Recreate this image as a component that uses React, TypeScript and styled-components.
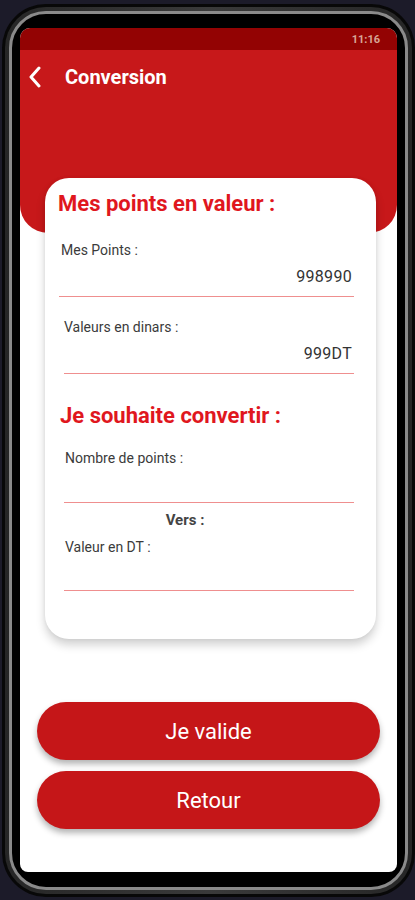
import React from 'react';
import styled, { createGlobalStyle } from 'styled-components';

const GlobalStyle = createGlobalStyle`
  html, body {
    margin: 0;
    padding: 0;
    background: #1c1b29;
    font-family: Roboto, "Liberation Sans", sans-serif;
  }
`;

interface FieldData {
  label: string;
  value?: string;
  indent?: boolean;
}

const pointsFields: FieldData[] = [
  { label: 'Mes Points :', value: '998990' },
  { label: 'Valeurs en dinars :', value: '999DT', indent: true },
];

const BackIcon: React.FC = () => (
  <svg width="12" height="22" viewBox="0 0 12 22" fill="none">
    <polyline points="10,2 2,11 10,20" stroke="#fff" strokeWidth="3" strokeLinecap="round" strokeLinejoin="round" />
  </svg>
);

const Field: React.FC<FieldData> = ({ label, value, indent = false }) => (
  <FieldBlock $indent={indent}>
    <FieldLabel>{label}</FieldLabel>
    <FieldValue>{value ?? '\u00a0'}</FieldValue>
  </FieldBlock>
);

export default function App() {
  return (
    <>
      <GlobalStyle />
      <Phone>
        <Rim>
          <Bezel>
            <Screen>
              <StatusBar>11:16</StatusBar>
              <Header>
                <HeaderRow>
                  <BackIcon />
                  <HeaderTitle>Conversion</HeaderTitle>
                </HeaderRow>
              </Header>

              <Card>
                <SectionTitle>Mes points en valeur :</SectionTitle>
                {pointsFields.map(f => <Field key={f.label} {...f} />)}

                <SectionTitle $spaced>Je souhaite convertir :</SectionTitle>
                <InputField $indent>
                  <FieldLabel>Nombre de points :</FieldLabel>
                </InputField>
                <Vers>Vers :</Vers>
                <InputField $indent $compact>
                  <FieldLabel>Valeur en DT :</FieldLabel>
                </InputField>
              </Card>

              <Actions>
                <ActionButton>Je valide</ActionButton>
                <ActionButton>Retour</ActionButton>
              </Actions>
            </Screen>
          </Bezel>
        </Rim>
      </Phone>
    </>
  );
}

const Phone = styled.div`
  box-sizing: border-box;
  margin: 4px 0 0 2px;
  width: 413px;
  height: 893px;
  padding: 3px;
  background: #080808;
  border-radius: 44px;
  display: flex;
`;

const Rim = styled.div`
  flex: 1;
  display: flex;
  padding: 4px;
  border-radius: 41px;
  background: linear-gradient(90deg, #262626, #3a3a3a 50%, #262626);
`;

const Bezel = styled.div`
  flex: 1;
  display: flex;
  padding: 14px 8px 15px;
  border: 3px solid #8a8a8a;
  border-radius: 37px;
  background: #000;
`;

const Screen = styled.div`
  flex: 1;
  display: flex;
  flex-direction: column;
  background: #fff;
  border-radius: 10px 10px 8px 8px;
  overflow: hidden;
`;

const StatusBar = styled.div`
  height: 22px;
  flex-shrink: 0;
  display: flex;
  align-items: center;
  justify-content: flex-end;
  padding-right: 17px;
  background: #930303;
  color: #d8a596;
  font-size: 11px;
  font-weight: 700;
`;

const Header = styled.div`
  height: 183px;
  flex-shrink: 0;
  background: #c7181a;
  border-radius: 0 0 28px 28px;
`;

const HeaderRow = styled.div`
  display: flex;
  align-items: center;
  height: 22px;
  margin-top: 16px;
  padding-left: 9px;
  gap: 24px;
`;

const HeaderTitle = styled.span`
  color: #fff;
  font-size: 20px;
  font-weight: 700;
`;

const Card = styled.div`
  position: relative;
  margin: -55px 21px 0 25px;
  padding: 13px 22px 48px 13px;
  background: #fff;
  border-radius: 24px;
  box-shadow: 0 6px 10px rgba(0, 0, 0, 0.18), 0 0 4px rgba(0, 0, 0, 0.05);
`;

const SectionTitle = styled.h2<{ $spaced?: boolean }>`
  margin: ${p => (p.$spaced ? '29px 0 0 2px' : '0')};
  color: #e0171e;
  font-size: 22px;
  font-weight: 700;
  line-height: 26px;
`;

const FieldBlock = styled.div<{ $indent?: boolean }>`
  margin: 25px 0 0 ${p => (p.$indent ? '6px' : '1px')};
  padding: 0 0 0 ${p => (p.$indent ? '0' : '2px')};
  border-bottom: 1.5px solid #ef8f8f;
  & + & {
    margin-top: 22px;
  }
`;

const FieldLabel = styled.div`
  color: #3b3b3b;
  font-size: 14px;
  line-height: 16px;
`;

const FieldValue = styled.div`
  margin-top: 9px;
  padding: 0 2px 9px 0;
  text-align: right;
  color: #333;
  font-size: 16px;
  line-height: 20px;
  letter-spacing: 0.3px;
`;

const InputField = styled.div<{ $indent?: boolean; $compact?: boolean }>`
  margin: ${p => (p.$compact ? '11px' : '21px')} 0 0 ${p => (p.$indent ? '6px' : '0')};
  padding: 0 0 0 ${p => (p.$indent ? '1px' : '0')};
  height: ${p => (p.$compact ? '52px' : '53px')};
  box-sizing: border-box;
  border-bottom: 1.5px solid #ef8f8f;
`;

const Vers = styled.div`
  margin: 9px 0 0;
  padding-right: 42px;
  text-align: center;
  color: #444;
  font-size: 15px;
  font-weight: 700;
  line-height: 16px;
`;

const Actions = styled.div`
  display: flex;
  flex-direction: column;
  gap: 11px;
  margin: 63px 17px 0 17px;
`;

const ActionButton = styled.button`
  height: 58px;
  border: none;
  border-radius: 29px;
  background: #c51618;
  color: #fff;
  font-family: Roboto, "Liberation Sans", sans-serif;
  font-size: 22px;
  font-weight: 400;
  box-shadow: 0 4px 6px rgba(0, 0, 0, 0.3);
  cursor: pointer;
`;
